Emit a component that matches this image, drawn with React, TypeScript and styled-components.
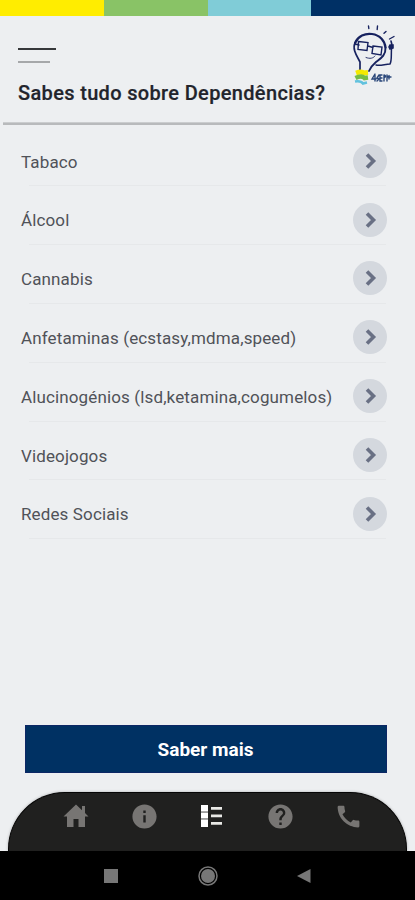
import React from "react";
import styled, { createGlobalStyle } from "styled-components";
import { MdInfo, MdHelp, MdCall } from "react-icons/md";

const GlobalStyle = createGlobalStyle`
  * { box-sizing: border-box; }
  body { margin: 0; background: #edeff1; font-family: Roboto, sans-serif; }
  button { font: inherit; border: 0; padding: 0; background: none; }
`;

const Screen = styled.div`
  width: 415px;
  height: 900px;
  display: flex;
  flex-direction: column;
  overflow: hidden;
  background: #edeff1;
`;

const Stripes = styled.div`
  display: grid;
  grid-template-columns: 104px 104px 103px 104px;
  height: 16px;
  flex: none;
`;

const Stripe = styled.span<{ $color: string }>`
  background: ${(p) => p.$color};
`;

const Header = styled.header`
  display: flex;
  justify-content: space-between;
  height: 106px;
  flex: none;
  padding: 0 15px 0 18px;
`;

const Heading = styled.div`
  padding-top: 32px;
`;

const MenuButton = styled.button`
  display: flex;
  flex-direction: column;
  gap: 11px;
`;

const MenuLine = styled.span<{ $width: number; $color: string }>`
  width: ${(p) => p.$width}px;
  height: 2px;
  background: ${(p) => p.$color};
`;

const Title = styled.h1`
  margin: 18px 0 0;
  font-size: 20px;
  line-height: 24px;
  font-weight: 500;
  letter-spacing: 0.34px;
  color: #22242c;
  -webkit-text-stroke: 0.2px #22242c;
  white-space: nowrap;
`;

const Logo = styled.svg`
  width: 60px;
  height: 72px;
  flex: none;
  margin: 2px -5px 0 0;
`;

const Rule = styled.div`
  height: 3px;
  margin-left: 3px;
  flex: none;
  background: #b8babc;
  border-top: 1px solid #cbcdcf;
`;

const List = styled.ul`
  list-style: none;
  margin: 0;
  padding: 6.4px 28px 0 21px;
  flex: 1;
`;

const Item = styled.li`
  display: flex;
  align-items: center;
  justify-content: space-between;
  height: 58.83px;
`;

const Label = styled.span`
  font-size: 17px;
  line-height: 24px;
  letter-spacing: 0.13px;
  color: #505258;
  padding-top: 1.4px;
  white-space: nowrap;
`;

const Go = styled.button`
  width: 34px;
  height: 34px;
  border-radius: 50%;
  background: #d4d8de;
  display: flex;
  align-items: center;
  justify-content: center;
`;

const Divider = styled.div`
  height: 1px;
  margin: -5px 1px 4px 8px;
  background: #e6e8ea;
`;

const More = styled.button`
  flex: none;
  height: 48px;
  margin: 0 28px 19px 25px;
  padding-right: 1px;
  background: #003163;
  box-shadow: inset 0 0 0 1px #0c2765;
  color: #fff;
  font-size: 19px;
  font-weight: 700;
`;

const TabBar = styled.nav`
  flex: none;
  height: 59px;
  margin: 0 8px;
  padding: 8px 43px 0 52px;
  display: flex;
  justify-content: space-between;
  align-items: flex-start;
  background: #20201f;
  border: 1px solid #050505;
  border-bottom: 0;
  border-radius: 57px 57px 0 0;
  box-shadow: 0 0 3px rgba(0, 0, 0, 0.28);
`;

const Tab = styled.button<{ $active?: boolean }>`
  width: 30px;
  height: 30px;
  display: flex;
  align-items: center;
  justify-content: center;
  color: ${(p) => (p.$active ? "#ffffff" : "#777573")};
`;

const SystemBar = styled.footer`
  flex: none;
  height: 49px;
  background: #000;
  display: flex;
  align-items: center;
  justify-content: space-between;
  padding: 0 104px;
`;

const SystemIcon = styled.svg`
  display: block;
`;

const topics = [
  "Tabaco",
  "Álcool",
  "Cannabis",
  "Anfetaminas (ecstasy,mdma,speed)",
  "Alucinogénios (lsd,ketamina,cogumelos)",
  "Videojogos",
  "Redes Sociais",
];

const BulbLogo = () => (
  <Logo viewBox="0 0 60 72" fill="none" stroke="#17225f" strokeLinecap="round">
    <path d="M15 52.500V44C12 38 7 31 10 25" strokeWidth="1.700" />
    <path d="M10 25C13 18 20 15 27 16c8 1 13 7 13.500 13.500" strokeWidth="2.200" />
    <path d="M40.500 29.500c.5 8-5 11-10 15-3 2.500-5 5-6.500 8.500" strokeWidth="1.900" />
    <path d="M23.500 8l.3 2.500M32.500 8l-.3 3.500M41 13.500l-2 1.800M49 18.500l-4.500 2.500" strokeWidth="1.400" />
    <path d="M13.500 23.500l9.500 1-1 8-9-1zM28 28l9 1-1 8-9-1.500zM23 28l5 1.500M10 26l4 1" strokeWidth="1.400" />
    <path d="M21 39.500c4 1.500 7 1 9-1.500" strokeWidth=".9" />
    <path d="M31 47c5 1 9-1 14-1 2-4 1-9 1.500-15" strokeWidth="1.500" />
    <path d="M44 29l1 2 3-1V27h-3zM47 27l-1-4" fill="#17225f" strokeWidth="1.600" />
    <path d="M11 55q6-2 7 0l5-.5" stroke="#f5e900" strokeWidth="5" strokeLinecap="butt" />
    <path d="M10.500 60q6-3 9 0l3.500-.5" stroke="#76bd45" strokeWidth="4.500" strokeLinecap="butt" />
    <path d="M10 63.500q6-1 8 2l4-1" stroke="#62c2de" strokeWidth="2.500" strokeLinecap="butt" />
    <path d="M30 56l-3 5h4m-1-4v6m4-6l-2 3 2 1-2 2m5-6h-2v6h2m-2-3h2m2-3v6m0-6q3 1 0 3m3-3v6m0-4l2-1v3m-2-2h4" stroke="#294679" strokeWidth="1.400" />
  </Logo>
);

export default function App() {
  return (
    <>
      <GlobalStyle />
      <Screen>
        <Stripes>
          <Stripe $color="#ffed00" />
          <Stripe $color="#89c366" />
          <Stripe $color="#80ccd7" />
          <Stripe $color="#003065" />
        </Stripes>
        <Header>
          <Heading>
            <MenuButton aria-label="Menu">
              <MenuLine $width={38} $color="#36383a" />
              <MenuLine $width={32} $color="#a6a8aa" />
            </MenuButton>
            <Title>Sabes tudo sobre Dependências?</Title>
          </Heading>
          <BulbLogo />
        </Header>
        <Rule />
        <List>
          {topics.map((name) => (
            <React.Fragment key={name}>
              <Item>
                <Label>{name}</Label>
                <Go aria-label={name}>
                  <svg width="14" height="18" viewBox="0 0 14 18" fill="none" stroke="#697084" strokeWidth="3.6">
                    <path d="M4 2.500L10.500 9 4 15.500" />
                  </svg>
                </Go>
              </Item>
              <Divider />
            </React.Fragment>
          ))}
        </List>
        <More>Saber mais</More>
        <TabBar>
          <Tab aria-label="Início">
            <svg width="26" height="24" viewBox="0 0 26 24" fill="currentColor">
              <path d="M13 .5L.5 12.500H4V23h6.500v-8h5v8H22V12.500h3.500L22 9V2h-3v4.200z" />
            </svg>
          </Tab>
          <Tab aria-label="Informação"><MdInfo size={29} /></Tab>
          <Tab aria-label="Lista" $active>
            <svg width="24" height="22" viewBox="0 0 24 22">
              <path d="M1 0h7v6H1zM1 7.500h7v6H1zM1 15h7v7H1z" fill="#fff" />
              <path d="M1 6h7v1.500H1zM1 13.500h7V15H1z" fill="#aaa" />
              <path d="M11 2h11v2.700H11zM11 9.500h11v2.700H11zM11 17h11v2.700H11z" fill="#e8e8e5" />
            </svg>
          </Tab>
          <Tab aria-label="Ajuda"><MdHelp size={29} /></Tab>
          <Tab aria-label="Telefone"><MdCall size={29} /></Tab>
        </TabBar>
        <SystemBar>
          <SystemIcon width="14" height="14"><path d="M0 0h14v14H0z" fill="#777" /></SystemIcon>
          <SystemIcon width="20" height="20" viewBox="0 0 20 20">
            <circle cx="10" cy="10" r="9" fill="none" stroke="#777" strokeWidth="1.500" />
            <circle cx="10" cy="10" r="7" fill="#777" />
          </SystemIcon>
          <SystemIcon width="14" height="16"><path d="M13.500 1v14L0 8z" fill="#777" /></SystemIcon>
        </SystemBar>
      </Screen>
    </>
  );
}
